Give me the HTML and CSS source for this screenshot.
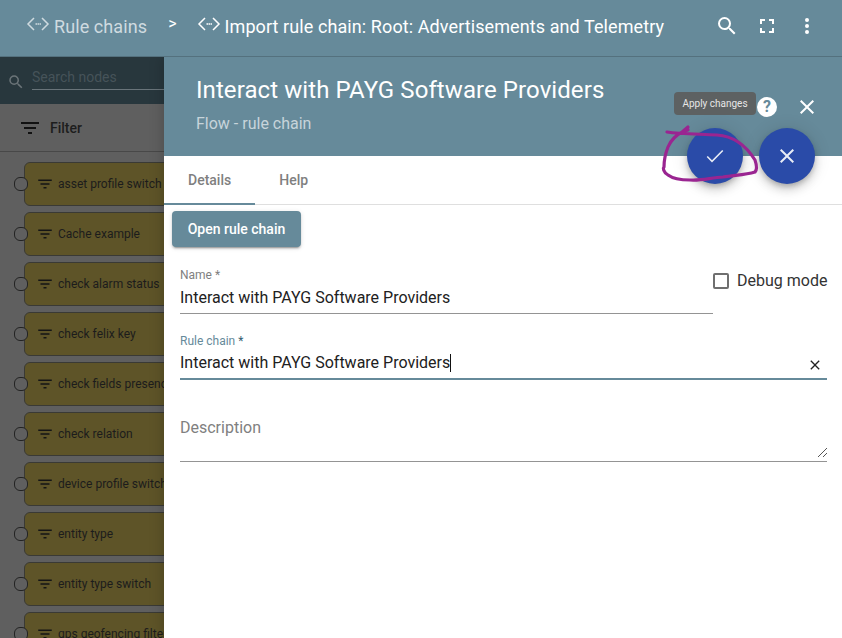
FILE: index.html
```html
<!DOCTYPE html>
<html lang="en">
<head>
<meta charset="utf-8">
<title>Rule chain</title>
<link rel="stylesheet" href="styles.css">
</head>
<body>
<svg class="defs" width="0" height="0" aria-hidden="true">
  <symbol id="rc" viewBox="0 0 24 24"><path d="M8 4 2 10l6 6M16 4l6 6-6 6" fill="none" stroke="currentColor" stroke-width="1.5"/><path d="M9.500 9.300h1.500v1.500H9.500zM11.500 9.300H13v1.500h-1.500zM13.500 9.300H15v1.500h-1.500z"/></symbol>
  <symbol id="flt" viewBox="0 0 24 24"><path d="M3 6h18v2H3zM6 11h12v2H6zM10 16h4v2h-4z"/></symbol>
  <symbol id="srch" viewBox="0 0 24 24"><path d="M15.500 14h-.79l-.28-.27A6.471 6.471 0 0 0 16 9.500 6.500 6.500 0 1 0 9.500 16c1.610 0 3.090-.59 4.230-1.570l.27.28v.79l5 4.990L20.490 19l-4.990-5zm-6 0C7.010 14 5 11.990 5 9.500S7.010 5 9.500 5 14 7.010 14 9.500 11.990 14 9.500 14z"/></symbol>
</svg>
<div class="app">
  <header class="topbar">
    <div class="crumb dim"><svg class="rc-icon"><use href="#rc"/></svg><span>Rule chains</span></div>
    <span class="sep">&gt;</span>
    <div class="crumb"><svg class="rc-icon"><use href="#rc"/></svg><span>Import rule chain: Root: Advertisements and Telemetry</span></div>
    <div class="top-actions">
      <svg class="tool"><use href="#srch"/></svg>
      <svg class="tool" viewBox="0 0 24 24"><path d="M7 14H5v5h5v-2H7zM5 10h2V7h3V5H5zM17 17h-3v2h5v-5h-2zM14 5v2h3v3h2V5z"/></svg>
      <svg class="tool" viewBox="0 0 24 24"><path d="M12 8a2 2 0 1 0 0-4 2 2 0 0 0 0 4zm0 2a2 2 0 1 0 0 4 2 2 0 0 0 0-4zm0 6a2 2 0 1 0 0 4 2 2 0 0 0 0-4z"/></svg>
    </div>
  </header>
  <div class="body">
    <aside class="sidebar">
      <div class="search">
        <svg class="search-icon"><use href="#srch"/></svg>
        <span class="search-text">Search nodes</span>
      </div>
      <div class="filter"><svg class="filter-icon"><use href="#flt"/></svg><span>Filter</span></div>
      <div class="nodes">
        <div class="node"><i class="port"></i><svg class="node-icon"><use href="#flt"/></svg><span>asset profile switch</span></div>
        <div class="node"><i class="port"></i><svg class="node-icon"><use href="#flt"/></svg><span>Cache example</span></div>
        <div class="node"><i class="port"></i><svg class="node-icon"><use href="#flt"/></svg><span>check alarm status</span></div>
        <div class="node"><i class="port"></i><svg class="node-icon"><use href="#flt"/></svg><span>check felix key</span></div>
        <div class="node"><i class="port"></i><svg class="node-icon"><use href="#flt"/></svg><span>check fields presence</span></div>
        <div class="node"><i class="port"></i><svg class="node-icon"><use href="#flt"/></svg><span>check relation</span></div>
        <div class="node"><i class="port"></i><svg class="node-icon"><use href="#flt"/></svg><span>device profile switch</span></div>
        <div class="node"><i class="port"></i><svg class="node-icon"><use href="#flt"/></svg><span>entity type</span></div>
        <div class="node"><i class="port"></i><svg class="node-icon"><use href="#flt"/></svg><span>entity type switch</span></div>
        <div class="node"><i class="port"></i><svg class="node-icon"><use href="#flt"/></svg><span>gps geofencing filter</span></div>
      </div>
    </aside>
    <section class="drawer">
      <div class="drawer-head">
        <h1 class="title">Interact with PAYG Software Providers</h1>
        <p class="subtitle">Flow - rule chain</p>
        <div class="help-icon">?</div>
        <svg class="close-icon" viewBox="0 0 24 24"><path d="M19 6.400 17.600 5 12 10.600 6.400 5 5 6.400 10.600 12 5 17.600 6.400 19 12 13.400 17.600 19 19 17.600 13.400 12z"/></svg>
        <div class="tooltip">Apply changes</div>
        <button class="fab fab-apply" type="button"><svg viewBox="0 0 24 24"><path d="M9 16.200 4.800 12l-1.100 1.100L9 18.400 20.300 7.100 19.200 6z"/></svg></button>
        <button class="fab fab-cancel" type="button"><svg viewBox="0 0 24 24"><path d="M19 6.400 17.600 5 12 10.600 6.400 5 5 6.400 10.600 12 5 17.600 6.400 19 12 13.400 17.600 19 19 17.600 13.400 12z"/></svg></button>
        <svg class="scribble" viewBox="0 0 100 65" fill="none"><path d="M28 7 21 13M7 12C20 14 40 14 57 15 72 16 85 24 95 40 97 46 97 50 95 52 85 55 75 55 63 57 50 58 40 61 30 60 20 60 12 58 8 55 3 52 3 48 4 47 4 40 6 32 8 27 10 22 16 13 28 10"/></svg>
      </div>
      <nav class="tabs">
        <div class="tab active">Details</div>
        <div class="tab">Help</div>
      </nav>
      <div class="content">
        <button class="open-btn" type="button">Open rule chain</button>
        <div class="name-row">
          <div class="field name-field">
            <label class="label">Name *</label>
            <div class="value">Interact with PAYG Software Providers</div>
          </div>
          <div class="debug"><i class="check"></i><span>Debug mode</span></div>
        </div>
        <div class="field chain-field">
          <label class="label teal">Rule chain <b>*</b></label>
          <div class="value"><span>Interact with PAYG Software Providers</span><i class="caret"></i>
            <svg class="clear" viewBox="0 0 24 24"><path d="M19 6.400 17.600 5 12 10.600 6.400 5 5 6.400 10.600 12 5 17.600 6.400 19 12 13.400 17.600 19 19 17.600 13.400 12z"/></svg>
          </div>
        </div>
        <div class="field desc-field">
          <div class="desc">Description</div>
          <svg class="grip" viewBox="0 0 9 9"><path d="M0 9 9 0M5 9l4-4" stroke="#555" stroke-width="1" fill="none"/></svg>
        </div>
      </div>
    </section>
  </div>
</div>
</body>
</html>
```
FILE: styles.css
```css
* { box-sizing: border-box; }
html, body { margin: 0; height: 100%; overflow: hidden; }
body { font-family: Roboto, "Liberation Sans", sans-serif; background: #fff; color: #212121; }
.defs { position: absolute; }
.app { width: 842px; height: 638px; display: flex; flex-direction: column; overflow: hidden; }

.topbar { height: 57px; flex: none; background: #668a9a; border-bottom: 1px solid #54717e; display: flex; align-items: center; padding: 0 0 4px 26px; color: #fff; font-size: 18px; position: relative; z-index: 2; }
.crumb { display: flex; align-items: center; gap: 4px; letter-spacing: .09px; }
.dim { color: #cfdbe0; }
.rc-icon { width: 24px; height: 24px; flex: none; fill: currentColor; }
.sep { margin: -6px 20px 0 21px; font-size: 16px; color: #fff; }
.top-actions { margin-left: auto; display: flex; gap: 16px; padding-right: 23px; }
.tool { width: 24px; height: 24px; fill: #fff; }

.body { flex: 1; display: flex; min-height: 0; }
.sidebar { width: 164px; flex: none; background: #5f5f5f; overflow: hidden; display: flex; flex-direction: column; }
.search { height: 47px; flex: none; background: #28373d; display: flex; align-items: center; padding: 0 0 0 7px; gap: 7px; }
.search-icon { width: 18px; height: 18px; fill: #6b7478; flex: none; margin-top: 2px; }
.search-text { flex: 1; height: 23px; margin-top: -5px; font-size: 14px; line-height: 20px; color: #465359; border-bottom: 1px solid #69747a; white-space: nowrap; }
.filter { height: 48px; flex: none; border-bottom: 1px solid #484848; display: flex; align-items: center; padding-left: 18px; gap: 8px; font-size: 14px; font-weight: 500; color: #1d1d1d; }
.filter-icon { width: 24px; height: 24px; fill: #111; }
.nodes { padding: 10px 0 0 24px; display: flex; flex-direction: column; gap: 6px; }
.node { position: relative; width: 190px; height: 44px; flex: none; background: #5e5428; border: 1px solid #3a3a35; border-radius: 6px; display: flex; align-items: center; padding-left: 11px; gap: 4px; font-size: 12px; color: #1c1c1c; white-space: nowrap; }
.port { position: absolute; left: -11px; top: 14px; width: 14px; height: 14px; border-radius: 6px; background: #5f5f5f; border: 1px solid #232323; }
.node-icon { width: 18px; height: 18px; fill: #151515; flex: none; }

.drawer { flex: 1; min-width: 0; background: #fff; display: flex; flex-direction: column; position: relative; z-index: 1; box-shadow: 0 0 14px rgba(0,0,0,.22); }
.drawer-head { height: 99px; flex: none; background: #668a9a; position: relative; color: #fff; padding: 17px 0 0 32px; }
.title { margin: 0; font-size: 24px; line-height: 32px; font-weight: 400; letter-spacing: .08px; }
.subtitle { margin: 8px 0 0; font-size: 16px; line-height: 20px; color: #c7d4da; }
.help-icon { position: absolute; left: 593px; top: 40px; width: 20px; height: 20px; border-radius: 50%; background: #fff; color: #668a9a; font-size: 16px; line-height: 20px; font-weight: 700; text-align: center; }
.close-icon { position: absolute; left: 631px; top: 38px; width: 24px; height: 24px; fill: #fff; }
.tooltip { position: absolute; left: 510px; top: 35px; width: 82px; height: 23px; border-radius: 4px; background: #5d6162; color: #e6e6e6; font-size: 10px; line-height: 23px; text-align: center; z-index: 4; }
.fab { position: absolute; top: 71px; width: 56px; height: 56px; padding: 16px; border: 0; border-radius: 50%; background: #2a4ba8; box-shadow: 0 3px 5px -1px rgba(0,0,0,.2), 0 6px 10px rgba(0,0,0,.14), 0 1px 18px rgba(0,0,0,.12); z-index: 3; }
.fab svg { display: block; width: 24px; height: 24px; fill: #e9edf6; }
.fab-apply { left: 523px; }
.fab-cancel { left: 595px; }
.scribble { position: absolute; left: 496px; top: 63px; width: 100px; height: 65px; stroke: #9a2591; stroke-width: 3.2; stroke-linecap: round; stroke-linejoin: round; z-index: 4; }

.tabs { height: 49px; flex: none; display: flex; border-bottom: 1px solid #dfdfdf; font-size: 14px; font-weight: 500; color: #7f7f7f; }
.tab { padding: 0 24px; line-height: 48px; text-align: center; }
.tab.active { border-bottom: 2px solid #668a9a; height: 49px; }

.content { flex: 1; padding: 6px 15px 0 8px; }
.open-btn { display: block; width: 129px; height: 36px; border: 0; border-radius: 4px; background: #668a9a; color: #fff; font: 500 14px Roboto, sans-serif; box-shadow: 0 3px 1px -2px rgba(0,0,0,.2), 0 2px 2px rgba(0,0,0,.14), 0 1px 5px rgba(0,0,0,.12); }
.name-row { display: flex; margin: 21px 0 0 8px; gap: 0; }
.field { position: relative; }
.name-field { flex: 1; height: 46px; border-bottom: 1px solid #949494; }
.name-field .value { margin-top: 6px; }
.label { display: block; font-size: 12px; line-height: 14px; color: #7f7f7f; }
.label.teal { color: #668a9a; }
.label b { font-weight: 400; color: #355f73; }
.value { font-size: 16px; line-height: 20px; margin-top: 5px; color: #212121; display: flex; align-items: center; }
.debug { width: 114px; flex: none; display: flex; align-items: flex-start; gap: 8px; font-size: 16px; line-height: 20px; color: #333; padding-top: 3px; white-space: nowrap; }
.check { width: 16px; height: 16px; margin-top: 2px; border: 2px solid #6f6f6f; border-radius: 2px; flex: none; }
.chain-field { margin: 20px 0 0 8px; height: 46px; border-bottom: 2px solid #668a9a; }
.caret { width: 1px; height: 18px; background: #111; }
.clear { width: 16px; height: 16px; margin: 4px 4px 0 auto; fill: #222; }
.desc-field { margin: 37px 0 0 8px; height: 45px; border-bottom: 1px solid #949494; }
.desc { font-size: 16px; line-height: 20px; color: #808080; padding-top: 1px; }
.grip { position: absolute; right: 0; bottom: 4px; width: 9px; height: 9px; }
```
